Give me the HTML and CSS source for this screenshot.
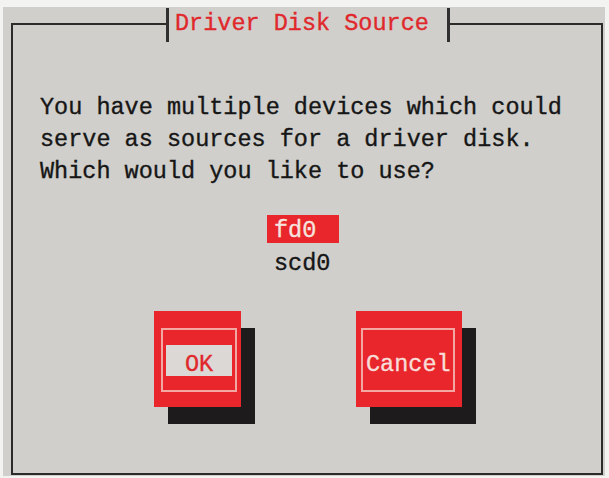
FILE: index.html
```html
<!DOCTYPE html>
<html>
<head>
<meta charset="utf-8">
<title>Driver Disk Source</title>
<link rel="stylesheet" href="styles.css">
</head>
<body>
<div class="screen">
  <div class="dialog">
    <div class="titlebar">
      <span class="rule rule-left"></span>
      <span class="tick"></span>
      <span class="title">Driver Disk Source</span>
      <span class="tick"></span>
      <span class="rule rule-right"></span>
    </div>
    <div class="content">
      <p class="message">You have multiple devices which could<br>serve as sources for a driver disk.<br>Which would you like to use?</p>
      <ul class="listbox">
        <li class="item selected">fd0</li>
        <li class="item">scd0</li>
      </ul>
      <div class="buttons">
        <div class="btn btn-ok">
          <div class="btn-frame">
            <div class="btn-label focused">OK</div>
          </div>
        </div>
        <div class="btn btn-cancel">
          <div class="btn-frame">
            <div class="btn-label">Cancel</div>
          </div>
        </div>
      </div>
    </div>
  </div>
</div>
</body>
</html>
```
FILE: styles.css
```css
html, body {
  margin: 0;
  padding: 0;
  background: #f3f3f1;
}

body {
  font-family: "Liberation Mono", "DejaVu Sans Mono", monospace;
  font-size: 23.5px;
  color: #161616;
  -webkit-text-stroke: 0.35px currentColor;
}

.screen {
  margin: 7px 0 0 3px;
  width: 602px;
  height: 469px;
  background: #d0cfcb;
  overflow: hidden;
}

.dialog {
  margin: 1px 0 0 8px;
  width: 592px;
}

.titlebar {
  display: flex;
  height: 35px;
}

.rule {
  align-self: flex-end;
  height: 20px;
  box-sizing: border-box;
  border-top: 2px solid #2b2b2b;
}

.rule-left {
  width: 155px;
  border-left: 2px solid #2b2b2b;
}

.rule-right {
  flex: 1;
  border-right: 2px solid #2b2b2b;
}

.tick {
  width: 3px;
  height: 34px;
  background: #303030;
}

.title {
  align-self: flex-start;
  margin-top: 3px;
  padding: 0 18px 0 6px;
  line-height: 1.133;
  color: #e0282c;
  white-space: nowrap;
}

.content {
  box-sizing: border-box;
  height: 432px;
  border: 2px solid #2b2b2b;
  border-top: none;
  padding-left: 27px;
  padding-top: 49px;
}

.message {
  margin: 0;
  line-height: 32px;
  white-space: nowrap;
}

.listbox {
  list-style: none;
  margin: 27px 0 0 227px;
  padding: 0;
  width: 72px;
}

.item {
  box-sizing: border-box;
  height: 34px;
  padding: 8px 0 0 7px;
  line-height: 26px;
}

.item.selected {
  height: 28px;
  padding-top: 4px;
  line-height: 24px;
  background: #e8262b;
  color: #f6e3df;
}

.buttons {
  display: flex;
  gap: 115px;
  margin: 34px 0 0 114px;
}

.btn {
  background: #e8262b;
  box-shadow: 14px 17px 0 #1d1b1b;
  height: 96px;
  box-sizing: border-box;
  padding-top: 17px;
}

.btn-ok {
  width: 87px;
  padding-left: 7px;
  padding-right: 4px;
}

.btn-cancel {
  width: 106px;
  padding-left: 5px;
  padding-right: 7px;
}

.btn-frame {
  height: 64px;
  box-sizing: border-box;
  border: 2px solid #f2a7a2;
  padding: 15px 3px 0 3px;
}

.btn-label {
  height: 31px;
  box-sizing: border-box;
  padding-top: 9px;
  line-height: 22px;
  text-align: center;
  color: #f8ddd8;
  white-space: nowrap;
}

.btn-label.focused {
  background: #dbd8d5;
  color: #e0282c;
}
```
